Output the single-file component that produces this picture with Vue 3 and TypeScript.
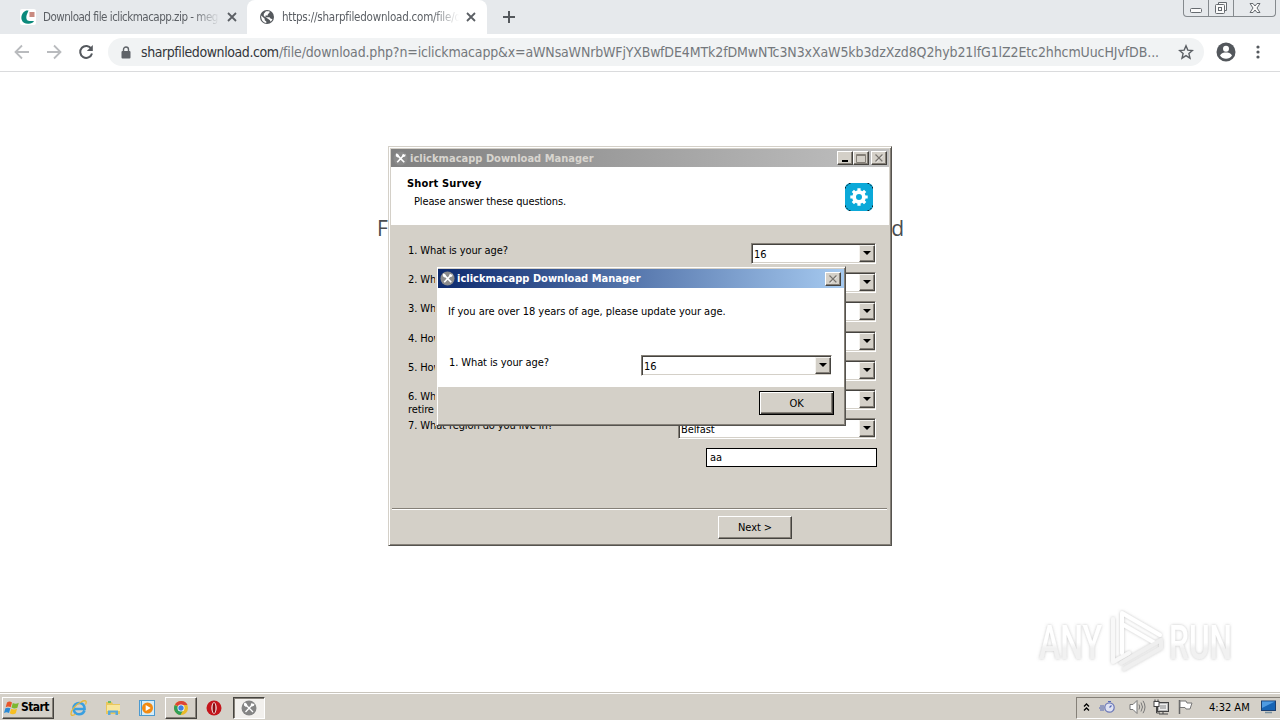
<script setup lang="ts">
interface Question {
  label: string
  value: string
  wide?: boolean
}

const questions: Question[] = [
  { label: '1. What is your age?', value: '16' },
  { label: '2. What', value: '' },
  { label: '3. What', value: '' },
  { label: '4. How', value: '' },
  { label: '5. How', value: '' },
  { label: '6. What\nretire', value: '' },
  { label: '7. What region do you live in?', value: 'Belfast', wide: true },
]

const host = 'sharpfiledownload.com'
const pathStart = '/file/download.php?n=iclickmacapp&x=aWNsaWNrbWFjYXBw'
const pathEnd = 'fDE4MTk2fDMwNTc3N3xXaW5kb3dzXzd8Q2hyb21lfG1lZ2Etc2hhcmUucHJvfDB...'
</script>

<template>
  <div class="screen">
    <header class="tabstrip">
      <div class="tab first">
        <svg class="fav" viewBox="0 0 16 16"><rect width="16" height="16" rx="2" fill="#fff" /><path d="M6.200 1.500C2.500 3 .8 7 1.600 10.500c.8 3.300 4 4.500 7.200 4.200 2-.2 4.500-.7 5.200-2.700H9.500C6.500 12 5.800 9 6.700 6L8.500 1.500z" fill="#0c8a7c" /><rect x="9.500" y="3" width="5" height="5" fill="#c98a80" /></svg>
        <span class="tab-title t1">Download file iclickmacapp.zip - meg</span>
        <svg class="close" viewBox="0 0 10 10"><path d="M1 1l8 8M9 1l-8 8" /></svg>
      </div>
      <div class="tab active">
        <svg class="fav globe" viewBox="0 0 16 16"><circle cx="8" cy="8" r="7" fill="#55595d" /><path d="M2.200 6.500l3.500 3.200v1.500l1.600 1.300v1.600C4 13.700 1.900 10.500 2.200 6.500zM7 2.200h3.500v1.600L8.800 5.200v1.400H6.500v1.600h4l1.300 1.500 1.700.3c-.4 1.200-1 2-1.800 2.700l-1-1.600-2.200-1.600L4.800 7V4.800z" fill="#fff" /></svg>
        <span class="tab-title t2">https://sharpfiledownload.com/file/d</span>
        <svg class="close" viewBox="0 0 10 10"><path d="M1 1l8 8M9 1l-8 8" /></svg>
      </div>
      <svg class="plus" viewBox="0 0 12 12"><path d="M6 0v12M0 6h12" /></svg>
      <div class="caption">
        <span class="cap"><svg width="14" height="14" viewBox="0 0 14 14"><rect x="1.500" y="7.500" width="11" height="4" rx="1" /></svg></span>
        <span class="cap"><svg width="14" height="14" viewBox="0 0 14 14"><path d="M4.500 3.500v-2h8v8h-2" /><rect x="1.500" y="3.500" width="9" height="9" rx="1" /><rect x="4.500" y="6.500" width="3" height="3" /></svg></span>
        <span class="cap big"><svg width="14" height="14" viewBox="0 0 14 14"><path d="M2 2.500h3L7 5l2-2.500h3L9 7l3 4.500H9L7 9l-2 2.500H2L5 7z" /></svg></span>
      </div>
    </header>

    <nav class="toolbar">
      <svg class="nav-ico" viewBox="0 0 16 16"><path d="M15 8H2M8 1.500L1.500 8 8 14.500" /></svg>
      <svg class="nav-ico" viewBox="0 0 16 16"><path d="M1 8h13M8 1.500L14.500 8 8 14.500" /></svg>
      <svg class="nav-ico reload" viewBox="0 0 16 16"><path d="M13.300 4.700A6 6 0 1 0 14 9.500" /><path d="M14.800 1v6H8.800z" class="solid" /></svg>
      <div class="omnibox">
        <svg class="lock" viewBox="0 0 10 13"><path d="M2.500 6V3.500a2.500 2.500 0 0 1 5 0V6" fill="none" stroke="#5f6368" stroke-width="1.400" /><rect x=".5" y="5" width="9" height="7.500" rx="1" fill="#5f6368" /></svg>
        <span class="host">{{ host }}</span><span class="path p1">{{ pathStart }}</span><span class="path p2">{{ pathEnd }}</span>
        <svg class="star" viewBox="0 0 16 16"><path d="M8 1.800l1.800 4.300 4.600.4-3.500 3.100 1.100 4.600L8 11.700l-4 2.500 1.100-4.600L1.600 6.500l4.600-.4z" /></svg>
      </div>
      <svg class="avatar" viewBox="0 0 20 20"><circle cx="10" cy="10" r="9.500" fill="#53575c" /><circle cx="10" cy="6.800" r="3" fill="#fff" /><path d="M4 13.500c1-2.400 4-2.900 6-2.900s5 .5 6 2.900c-1.500 2.200-3.500 3.300-6 3.300s-4.500-1.100-6-3.300z" fill="#fff" /></svg>
      <svg class="dots" viewBox="0 0 4 14"><circle cx="2" cy="2" r="1.600" /><circle cx="2" cy="7" r="1.600" /><circle cx="2" cy="12" r="1.600" /></svg>
    </nav>

    <main class="page">
      <p class="message"><span>F</span><span>d</span></p>
    </main>

    <section class="window main-window">
      <div class="titlebar inactive">
        <svg class="tool" viewBox="0 0 16 16"><circle cx="8" cy="8" r="7.500" fill="#8b8b8b" /><path d="M4.500 4.500l7.500 7.500M12 4l-7.500 8" stroke="#fff" stroke-width="1.800" /><path d="M3 3.500l1-1 2 1.500.3 2L5 7 3 5.500zM10.500 3l1.500 1 1.500-.5L13 5.800 11 6.500 9.700 5z" fill="#fff" /></svg>
        <span class="caption-text">iclickmacapp Download Manager</span>
        <span class="wbtn"><svg viewBox="0 0 12 10"><path d="M3 8h6" stroke="#000" stroke-width="2" /></svg></span>
        <span class="wbtn"><svg viewBox="0 0 12 10"><path d="M1.500 1.500h9v8h-9zM1.500 2.500h9" stroke="#858078" fill="none" /></svg></span>
        <span class="wbtn gap"><svg viewBox="0 0 12 10"><path d="M3 2l7 7M10 2L3 9" stroke="#fff" stroke-width="1.200" /><path d="M2.500 1.500l7 7M9.500 1.500l-7 7" stroke="#77736d" stroke-width="1.400" /></svg></span>
      </div>
      <div class="heading">
        <div>
          <h1>Short Survey</h1>
          <p>Please answer these questions.</p>
        </div>
        <svg class="gear" viewBox="0 0 28 28"><rect width="28" height="28" rx="5.500" fill="#0ba9d9" /><path d="M5.500 .5H4L.5 4v1.500M22.500 .5H24L27.500 4v1.500M5.500 27.500H4L.5 24v-1.500M22.500 27.500H24l3.500-3.500v-1.500" fill="none" stroke="#0b2630" stroke-dasharray="2 1" /><circle cx="14" cy="14" r="4.900" fill="none" stroke="#fff" stroke-width="3.800" /><path d="M14 5.300v3M14 19.700v3M5.300 14h3M19.700 14h3M7.850 7.850L10 10M18 18l2.150 2.150M20.150 7.850L18 10M10 18l-2.150 2.150" stroke="#fff" stroke-width="3.200" /></svg>
      </div>
      <div class="survey">
        <div v-for="(q, i) in questions" :key="i" class="question" :class="{ tall: i === 2 }">
          <span class="label">{{ q.label }}</span>
          <span class="combo" :class="{ wide: q.wide }"><span class="val">{{ q.value }}</span><span class="drop"></span></span>
        </div>
        <div class="field">aa</div>
      </div>
      <div class="footer"><span class="button next">Next &gt;</span></div>
    </section>

    <section class="window dialog">
      <div class="titlebar">
        <svg class="tool" viewBox="0 0 16 16"><circle cx="8" cy="8" r="7.500" fill="#8b8b8b" /><path d="M4.500 4.500l7.500 7.500M12 4l-7.500 8" stroke="#fff" stroke-width="1.800" /><path d="M3 3.500l1-1 2 1.500.3 2L5 7 3 5.500zM10.500 3l1.500 1 1.500-.5L13 5.800 11 6.500 9.700 5z" fill="#fff" /></svg>
        <span class="caption-text">iclickmacapp Download Manager</span>
        <span class="wbtn"><svg viewBox="0 0 12 10"><path d="M3 2l7 7M10 2L3 9" stroke="#fff" stroke-width="1.200" /><path d="M2.500 1.500l7 7M9.500 1.500l-7 7" stroke="#77736d" stroke-width="1.400" /></svg></span>
      </div>
      <div class="dialog-body">
        <p class="notice">If you are over 18 years of age, please update your age.</p>
        <div class="dialog-row">
          <span class="label">1. What is your age?</span>
          <span class="combo"><span class="val">16</span><span class="drop"></span></span>
        </div>
      </div>
      <div class="dialog-footer"><span class="button ok">OK</span></div>
    </section>

    <svg class="watermark" viewBox="0 0 220 74">
      <defs>
        <linearGradient id="wm" x1="0" y1="0" x2="0" y2="1"><stop offset="0.5" stop-color="#fff" /><stop offset="0.6" stop-color="#f1f1f1" /></linearGradient>
        <filter id="soft" x="-10%" y="-20%" width="120%" height="140%"><feDropShadow dx="0" dy="0" stdDeviation="1.700" flood-color="#888" flood-opacity=".5" /></filter>
      </defs>
      <g filter="url(#soft)">
        <text x="9" y="53" textLength="63" lengthAdjust="spacingAndGlyphs" fill="url(#wm)">ANY</text>
        <text x="139" y="53" textLength="63" lengthAdjust="spacingAndGlyphs" fill="url(#wm)">RUN</text>
        <g fill="none" stroke-linejoin="round" stroke-linecap="round" stroke-width="4">
          <path d="M92 47V7l38 22M92 18l33 19" stroke="#fff" />
          <path d="M83 13v43l16-9" stroke="#f8f8f8" />
          <path d="M91 57l40-23M94 63l37-21v-8" stroke="#efefef" />
        </g>
      </g>
    </svg>

    <footer class="taskbar">
      <div class="task start">
        <svg viewBox="0 0 16 16"><path d="M3 2.500C5 1 6.500 1.500 8 2.500L6.700 7.300C5 6.500 3.500 6.300 1.700 7.200z" fill="#e8562a" /><path d="M8.800 3c1.700 1 3.600 1.200 6-.2l-1.400 4.900c-2.200 1.200-4 .9-5.900-.1z" fill="#7cb82f" /><path d="M1.400 8.300c2-1 3.500-.7 5-.1L5 13c-1.700-.8-3-1-5 .1z" fill="#2b8ad6" /><path d="M7.200 8.700c1.800.9 3.700 1.100 5.900-.1l-1.300 4.700c-2.300 1.400-4.200 1-6 0z" fill="#f7bf22" /></svg>
        <b>Start</b>
      </div>
      <svg class="app ie" viewBox="0 0 18 18"><path d="M14.500 11.500c-1 2.500-3 3.700-5.500 3.700-3.300 0-5.500-2.300-5.500-5.700S6 4 9.200 4s5.600 2.200 5.400 6H5" fill="none" stroke="#3a9fe0" stroke-width="2.600" /><path d="M15.500 5.500C17.500 1.500 15 .8 11 3 6 5.500 1 11 1 14.800c0 2.400 2.500 1.700 4.500.5" fill="none" stroke="#e9b83a" stroke-width="1.300" /></svg>
      <svg class="app" viewBox="0 0 18 18"><path d="M2 3h6l1 2h7v10H2z" fill="#e9c75c" /><path d="M3 6h13v6H3z" fill="#f8e69c" /><path d="M4 16V11.500h10V16h-2.500v-2.500h-5V16z" fill="#58a8d9" /><path d="M4 2h3v2H4z" fill="#6dbb66" /></svg>
      <svg class="app" viewBox="0 0 18 18"><rect x="1.500" y="1.500" width="13" height="15" fill="#b9def4" stroke="#4c9ad0" /><rect x="3.500" y="1.500" width="13" height="15" fill="#d5edf9" stroke="#4c9ad0" /><circle cx="9.500" cy="9" r="5.500" fill="#f38a12" /><path d="M7.700 6l5 3-5 3z" fill="#fff" /></svg>
      <div class="task chrome">
        <svg viewBox="0 0 16 16"><circle cx="8" cy="8" r="7" fill="#e9b92a" /><path d="M8 8L2 4.500A7 7 0 0 1 14.500 5H8z" fill="#dc4437" /><path d="M8 8L1.700 5A7 7 0 0 0 7.500 15l3-5.500z" fill="#2f9e57" /><circle cx="8" cy="8" r="3.500" fill="#fff" /><circle cx="8" cy="8" r="2.700" fill="#3f7fe0" /></svg>
      </div>
      <svg class="app opera" viewBox="0 0 16 16"><circle cx="8" cy="8" r="7.500" fill="#c4151c" /><ellipse cx="8" cy="8" rx="2.600" ry="5.800" fill="#fff" /><ellipse cx="8" cy="8" rx="1.500" ry="5" fill="#8e0b10" /></svg>
      <div class="task pressed">
        <svg viewBox="0 0 16 16"><circle cx="8" cy="8" r="7.500" fill="#858585" /><path d="M4.500 4.500l7.500 7.500M12 4l-7.500 8" stroke="#fff" stroke-width="1.300" /><path d="M3 3.500l1-1 2 1.500.3 2L5 7 3 5.500zM10.500 3l1.500 1 1.500-.5L13 5.800 11 6.500 9.700 5z" fill="#fff" /></svg>
      </div>
      <div class="tray">
        <svg class="chev" viewBox="0 0 7 8"><path d="M1 3.500L3.500 1 6 3.500M1 7.500L3.500 5 6 7.500" fill="none" stroke="#000" stroke-width="1.300" /></svg>
        <svg class="clock-ico" viewBox="0 0 16 14"><circle cx="10.500" cy="7.500" r="4.700" fill="#dfe2f2" stroke="#6a77b8" stroke-width="1.200" /><path d="M10.500 7.500l2-2M9 1.500h3M1 6h4M0 8h5M1 10h4" stroke="#5366b5" stroke-width="1.200" fill="none" /></svg>
        <svg class="speaker" viewBox="0 0 17 16"><path d="M1 5.500h3l4-4v13l-4-4H1z" fill="#fff" stroke="#777" /><path d="M10 5.500q1.500 2.500 0 5M12 3.500q3 4.500 0 9M14 1.800q4 6.200 0 12.400" fill="none" stroke="#777" /></svg>
        <svg class="net" viewBox="0 0 16 16"><rect x="4.500" y="3.500" width="11" height="9" fill="#b9b9b9" stroke="#444" /><rect x="6.500" y="5.500" width="7" height="5" fill="none" stroke="#eee" /><path d="M6 15h9M10 13v2" stroke="#444" /><rect x="1" y="2.500" width="5" height="5" fill="#fff" stroke="#444" /><path d="M2 .5v2M5 .5v2M3.500 8v6H7" stroke="#444" fill="none" /></svg>
        <svg class="flag" viewBox="0 0 16 16"><path d="M2.500 1v14" stroke="#666" stroke-width="1.500" /><path d="M3 2h6l1 2h5l-2 6H9L8 8.500H3z" fill="#fff" stroke="#777" /></svg>
        <span class="time">4:32 AM</span>
        <svg class="desk" viewBox="0 0 15 14"><rect x=".5" y="1" width="14" height="9.500" fill="#1764b5" stroke="#1c3f70" /><path d="M1 1.500h13L1 8z" fill="#4f9be2" /><path d="M4 12.500h7" stroke="#78909f" stroke-width="1.500" /></svg>
      </div>
    </footer>
  </div>
</template>

<style>
body {
  margin: 0;
  overflow: hidden;
}
</style>

<style scoped>
* {
  box-sizing: border-box;
}
.screen {
  position: relative;
  width: 1280px;
  height: 720px;
  display: flex;
  flex-direction: column;
  background: #fff;
  color: #000;
  font: 11px/13px "DejaVu Sans Condensed", "DejaVu Sans", sans-serif;
  font-stretch: condensed;
  letter-spacing: -0.1px;
  white-space: pre;
  overflow: hidden;
}
svg {
  display: block;
  flex: none;
}
p,
h1 {
  margin: 0;
}

.tabstrip {
  flex: none;
  display: flex;
  height: 34px;
  background: #e6e9ec;
}
.tab {
  display: flex;
  align-items: center;
  height: 34px;
  color: #5b5f64;
}
.first {
  width: 247px;
  padding-left: 20px;
  border-radius: 0 0 8px 0;
}
.active {
  width: 240px;
  padding-left: 12px;
  background: #fff;
  border-radius: 8px 8px 0 0;
}
.fav {
  width: 16px;
  height: 16px;
}
.tab-title {
  width: 177px;
  margin-left: 7px;
  margin-right: -2px;
  font-size: 11.5px;
  line-height: 16px;
  mask-image: linear-gradient(90deg, #000 85%, transparent 100%);
}
.t1 {
  letter-spacing: -0.5px;
}
.t2 {
  letter-spacing: -0.22px;
}
.close {
  width: 10px;
  height: 10px;
  margin-left: 9px;
}
.close path {
  stroke: #5b5f64;
  stroke-width: 1.8;
}
.plus {
  width: 12px;
  height: 12px;
  margin: 11px 0 0 16px;
}
.plus path {
  stroke: #54585c;
  stroke-width: 2;
}
.caption {
  display: flex;
  height: 17px;
  margin-left: auto;
  margin-right: 4px;
  border: 1px solid #858a8e;
  border-top: 0;
  border-radius: 0 0 4px 4px;
}
.cap {
  display: flex;
  justify-content: center;
  align-items: center;
  width: 25px;
  border-right: 1px solid #858a8e;
}
.cap.big {
  width: 41px;
  border: 0;
}
.cap path,
.cap rect {
  fill: #fafafa;
  stroke: #666b70;
}

.toolbar {
  flex: none;
  display: flex;
  align-items: center;
  height: 38px;
  padding: 0 0 1px 14px;
  border-bottom: 1px solid #dadbdd;
}
.nav-ico {
  width: 16px;
  height: 16px;
  margin-right: 16px;
}
.nav-ico path {
  fill: none;
  stroke: #b9bbbe;
  stroke-width: 1.8;
}
.reload {
  margin-right: 14px;
}
.reload path {
  stroke: #55595e;
  stroke-width: 2;
}
.reload path.solid {
  fill: #55595e;
  stroke: none;
}
.omnibox {
  display: flex;
  align-items: center;
  width: 1096px;
  height: 28px;
  padding-left: 13px;
  border-radius: 14px;
  background: #f1f3f4;
  font: 14px/20px "DejaVu Sans Condensed", "DejaVu Sans", sans-serif;
  font-weight: 200;
  font-stretch: condensed;
}
.lock {
  width: 10px;
  height: 13px;
  margin-right: 10px;
}
.host {
  width: 138px;
  color: #33363a;
  letter-spacing: -0.42px;
}
.path {
  color: #74787c;
}
.p1 {
  width: 381px;
  letter-spacing: -0.15px;
}
.p2 {
  width: 500px;
  letter-spacing: -0.1px;
}
.star {
  width: 16px;
  height: 16px;
  margin-left: 18px;
}
.star path {
  fill: none;
  stroke: #5b5f64;
  stroke-width: 1.4;
}
.avatar {
  width: 20px;
  height: 20px;
  margin-left: 12px;
}
.dots {
  width: 4px;
  height: 14px;
  margin-left: 20px;
  fill: #55595e;
}

.page {
  flex: 1;
  padding: 142px 0 0 377px;
}
.message {
  display: flex;
  justify-content: space-between;
  width: 527px;
  font: 21px/28px "Open Sans", sans-serif;
  color: #4a4d50;
}

.window {
  position: absolute;
  display: flex;
  flex-direction: column;
  background: #d4d0c8;
  border: 1px solid;
  border-color: #d4d0c8 #55534f #55534f #d4d0c8;
  box-shadow: inset 1px 1px #fff, inset -1px -1px #858078;
}
.main-window {
  left: 388px;
  top: 146px;
  width: 504px;
  height: 400px;
  padding: 2px;
}
.dialog {
  left: 436px;
  top: 266px;
  width: 410px;
  height: 160px;
  padding: 2px 1px 1px;
  box-shadow: inset 1px 1px #fff, inset -1px -1px #858078, -1px 0 #d4d0c8;
}
.titlebar {
  flex: none;
  display: flex;
  align-items: center;
  height: 18px;
  padding: 0 3px 0 2px;
  background: linear-gradient(90deg, #0d2a6e, #a6caf0);
  color: #fff;
  font-weight: bold;
}
.dialog .titlebar {
  height: 19px;
}
.titlebar.inactive {
  padding-right: 2px;
  background: linear-gradient(90deg, #808080, #c0c0c0);
  color: #d8d5cf;
}
.tool {
  width: 15px;
  height: 15px;
}
.caption-text {
  flex: 1;
  margin-left: 2px;
  letter-spacing: 0.02px;
}
.wbtn {
  width: 16px;
  height: 14px;
  padding: 2px 1px;
  background: #d4d0c8;
  border: 1px solid;
  border-color: #fff #45433f #45433f #fff;
  box-shadow: inset -1px -1px #858078;
}
.wbtn svg {
  width: 12px;
  height: 10px;
  margin-top: -1px;
}
.gap {
  margin-left: 2px;
}
.heading {
  flex: none;
  display: flex;
  justify-content: space-between;
  height: 58px;
  padding: 10px 16px 0 16px;
  background: #fff;
}
h1 {
  font-size: 11px;
  line-height: 13px;
  letter-spacing: 0.15px;
}
.heading p {
  margin: 5px 0 0 7px;
  letter-spacing: -0.13px;
}
.gear {
  width: 28px;
  height: 28px;
  margin-top: 6px;
}
.survey {
  height: 283px;
  padding: 18px 12px 0 17px;
}
.question {
  display: flex;
  justify-content: space-between;
  height: 29px;
}
.question.tall {
  height: 30px;
}
.label {
  padding-top: 1px;
}
.combo {
  display: flex;
  width: 125px;
  height: 21px;
  padding: 2px;
  background: #fff;
  border: 1px solid;
  border-color: #858078 #fff #fff #858078;
  box-shadow: inset 1px 1px #45433f, inset -1px -1px #d4d0c8;
  margin-right: 1px;
}
.combo.wide {
  width: 198px;
}
.val {
  flex: 1;
  padding: 2px 0 0;
}
.drop {
  display: flex;
  justify-content: center;
  align-items: center;
  width: 16px;
  margin: -1px -2px -1px 0;
  background: #d4d0c8;
  border: 1px solid;
  border-color: #f5f3ef #45433f #45433f #f5f3ef;
  box-shadow: inset -1px -1px #858078;
}
.drop::before {
  content: "";
  margin: 0 1px 1px 0;
  border: 4px solid transparent;
  border-top-color: #000;
  border-bottom: 0;
}
.field {
  width: 171px;
  height: 19px;
  margin: 1px 0 0 auto;
  padding: 2px 3px;
  background: #fff;
  border: 1px solid #000;
}
.footer {
  flex: 1;
  margin: 0 2px 0 1px;
  padding: 7px 0 0 326px;
  border-top: 1px solid #858078;
  box-shadow: inset 0 1px #fff;
}
.button {
  display: flex;
  justify-content: center;
  align-items: center;
  background: #d4d0c8;
  border: 1px solid;
  border-color: #fff #45433f #45433f #fff;
  box-shadow: inset -1px -1px #858078;
}
.next {
  width: 74px;
  height: 23px;
}
.dialog-body {
  height: 99px;
  padding: 17px 12px 0 10px;
  background: #fff;
}
.notice {
  height: 50px;
  letter-spacing: -0.03px;
}
.dialog-row {
  display: flex;
  justify-content: space-between;
  padding-left: 1px;
}
.dialog-row .combo {
  width: 191px;
  margin-right: 0;
}
.dialog-footer {
  display: flex;
  justify-content: flex-end;
  padding: 4px 10px 0 0;
}
.ok {
  width: 75px;
  height: 24px;
  border: 1px solid #000;
  box-shadow: inset 1px 1px #fff, inset -1px -1px #45433f, inset -2px -2px #858078;
}

.watermark {
  position: absolute;
  left: 1030px;
  top: 606px;
  width: 220px;
  height: 74px;
}
.watermark text {
  font: 500 48px Roboto, sans-serif;
  letter-spacing: 0;
}

.taskbar {
  flex: none;
  display: flex;
  align-items: center;
  height: 28px;
  padding: 2px 0 0 2px;
  background: #d4d0c8;
  border-top: 1px solid #c9c5bd;
  box-shadow: inset 0 1px #fff;
}
.task {
  display: flex;
  align-items: center;
  justify-content: center;
  width: 32px;
  height: 22px;
  background: #d4d0c8;
  border: 1px solid;
  border-color: #fff #45433f #45433f #fff;
  box-shadow: inset -1px -1px #858078;
}
.task svg {
  width: 16px;
  height: 16px;
}
.start {
  width: 52px;
  justify-content: flex-start;
  padding-left: 1px;
  font-size: 12px;
  letter-spacing: -0.55px;
}
.start b {
  margin-left: 1px;
}
.app {
  width: 18px;
  height: 18px;
  margin-left: 16px;
}
.chrome {
  margin-left: 9px;
}
.app.opera {
  width: 16px;
  height: 16px;
  margin-left: 9px;
}
.pressed {
  margin-left: 11px;
  background: #f2f0ed;
  border-color: #45433f #fff #fff #45433f;
  box-shadow: inset 1px 1px #858078;
}
.tray {
  display: flex;
  align-items: center;
  width: 204px;
  height: 22px;
  margin-left: auto;
  padding: 0 0 1px 6px;
  border: 1px solid;
  border-color: #858078 #fff #fff #858078;
  border-right: 0;
}
.chev {
  width: 7px;
  height: 8px;
}
.clock-ico {
  width: 16px;
  height: 14px;
  margin-left: 9px;
}
.speaker {
  width: 17px;
  height: 16px;
  margin-left: 14px;
}
.net {
  width: 16px;
  height: 16px;
  margin-left: 7px;
}
.flag {
  width: 16px;
  height: 16px;
  margin-left: 8px;
}
.time {
  width: 42px;
  margin-left: 16px;
  letter-spacing: 0;
}
.desk {
  width: 15px;
  height: 14px;
  margin-left: 10px;
}
</style>
